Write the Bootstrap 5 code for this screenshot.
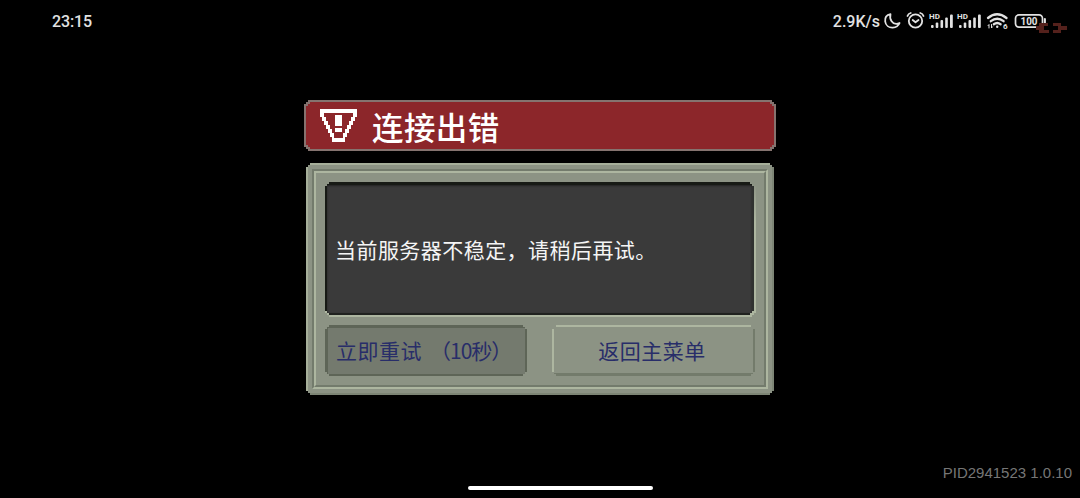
<!DOCTYPE html>
<html lang="zh-CN">
<head>
<meta charset="utf-8">
<meta name="viewport" content="width=device-width, initial-scale=1">
<title>连接出错</title>
<link href="https://cdn.jsdelivr.net/npm/bootstrap@5.3.0/dist/css/bootstrap.min.css" rel="stylesheet">
<style>
body{background:#000;font-family:"Noto Sans CJK SC",sans-serif;height:498px}
.status-bar{height:42px;padding:1px 33px 0 52px;color:#e2e2e2;font:500 16px/42px Roboto,sans-serif}
.status-bar svg{display:block}
.clock{letter-spacing:-.15px}
.rate{margin-right:1px}
.cut{--c:4px;clip-path:polygon(0 var(--c),2px var(--c),2px 2px,var(--c) 2px,var(--c) 0,calc(100% - var(--c)) 0,calc(100% - var(--c)) 2px,calc(100% - 2px) 2px,calc(100% - 2px) var(--c),100% var(--c),100% calc(100% - var(--c)),calc(100% - 2px) calc(100% - var(--c)),calc(100% - 2px) calc(100% - 2px),calc(100% - var(--c)) calc(100% - 2px),calc(100% - var(--c)) 100%,var(--c) 100%,var(--c) calc(100% - 2px),2px calc(100% - 2px),2px calc(100% - var(--c)),0 calc(100% - var(--c)))}
.dialog-box{width:472px;padding-top:58px}
.title-frame{height:51px;background:#85736f;padding:2px}
.title-fill{background:#8c262a;height:47px;padding-left:14px}
.title-text{font-size:31.500px;letter-spacing:.4px;line-height:47px;font-weight:500;color:#fff;margin-left:15px;padding-top:1px}
.panel{width:468px;height:232px;margin-top:12px;background:#8c9384;border:2px solid;border-color:#a6af9a #7d8575 #7d8575 #a6af9a;padding:4px}
.panel-groove{height:220px;border:2px solid;border-color:#737b6c #adb6a0 #adb6a0 #737b6c}
.panel-ridge{height:216px;border:2px solid;border-color:#adb6a0 #737b6c #737b6c #adb6a0}
.panel-face{height:212px;background:#8c9384;padding:9px 9px 0 9px}
.screen-rim{height:135px;background:linear-gradient(#8c9384,#adb6a0 30%);padding:0 2px 2px 0;width:431px}
.screen{height:133px;background:#3a3a3a;border:2px solid #20221f;border-top:3px solid #171a15;border-left-color:#171a15;border-right-color:#303230;color:#f5f5f5;font-size:21px;letter-spacing:.45px;padding:2px 0 0 8px;box-shadow:inset 0 1px 2px #222}
.pixel-btn{height:51px;font-size:21px;letter-spacing:.5px;line-height:1;color:#282d69;padding:0;border:0;white-space:nowrap;border-radius:0}
.btn-down,.btn-down:hover{width:202px;background:#747a6e;border:3px solid #5e6557;border-right-width:2px;border-bottom-width:2px;color:#282d69;padding-bottom:2px}
.btn-up,.btn-up:hover{width:203px;background:#8c9384;border:2px solid;border-bottom-width:3px;border-color:#adb6a0 #737b6b #737b6b #adb6a0;color:#282d69;padding-right:3px}
.seconds{letter-spacing:-1px}
.build-id{position:absolute;right:8px;bottom:14px;font:15px/22px "Liberation Sans",sans-serif;color:#767676}
.home-bar{position:absolute;left:468px;bottom:8px;width:185px;height:4px;background:#fff}
.net-mark{position:absolute;left:1036px;top:20px}
</style>
</head>
<body class="position-relative overflow-hidden m-0">
<header class="status-bar d-flex justify-content-between">
  <span class="clock">23:15</span>
  <div class="d-flex">
    <span class="rate">2.9K/s</span>
    <svg width="166" height="42" fill="none" stroke="#e2e2e2" stroke-width="1.8" stroke-linecap="round" stroke-linejoin="round">
      <path d="M9.500 13.200C5 14 3.800 17 4.200 20.500c.5 4 3.800 6.300 7.600 6.100 3.500-.2 5.700-2 6.800-4.600-3.200 1.400-6.400.6-8-1.800-1.500-2.200-1.800-4.600-1.100-7z"/>
      <circle cx="34.500" cy="20" r="6.700"/>
      <path d="M26.500 15q.8-2.400 3.200-3M42.500 15q-.8-2.400-3.200-3M31.700 19l2.800 2.300 3-2.300"/>
      <g id="signal"><g fill="#e2e2e2" stroke="none"><rect x="50" y="24" width="2.600" height="3" rx="1"/><rect x="54.700" y="21.500" width="2.600" height="5.500" rx="1"/><rect x="59.500" y="19" width="2.600" height="8" rx="1"/><rect x="64.200" y="16.500" width="2.600" height="10.500" rx="1"/><rect x="69" y="13.500" width="2.800" height="13.500" rx="1"/><text x="48" y="18" font-size="8" font-weight="700">HD</text></g></g>
      <use href="#signal" x="28"/>
      <path d="M107 17q9-7.500 18.500 0M109.800 20.200q6.400-5 12.800 0M112.800 23.300q3.400-2.500 6.800 0" stroke-width="2.300"/>
      <circle cx="116.200" cy="25.800" r="1.200" fill="#e2e2e2" stroke="none"/>
      <path d="M108 27v-3.500l-1 1.200M110.500 23.500V27l1-1.200" stroke-width="1"/>
      <text x="122" y="28" font-size="8" font-weight="700" fill="#e2e2e2" stroke="none">6</text>
      <rect x="134.500" y="13.900" width="27" height="12.200" rx="3.500" stroke-width="1.700"/>
      <path d="M163.900 18v4" stroke-width="2"/>
      <text x="148" y="24" text-anchor="middle" font-size="11" font-weight="700" textLength="17" lengthAdjust="spacingAndGlyphs" fill="#e2e2e2" stroke="none">100</text>
    </svg>
  </div>
</header>
<svg class="net-mark" width="34" height="15" fill="#54211c"><path d="M0 6h3V3h9v3H8v4h5v3H3v-3H0zM17 3h8v3h6v4h-6v3h-8v-3h5V6h-5z"/></svg>

<main class="dialog-box mx-auto">
  <div class="title-frame cut">
    <div class="title-fill cut d-flex align-items-center">
      <svg width="37" height="36" viewBox="0 0 36 36" preserveAspectRatio="none" fill="#fff" shape-rendering="crispEdges">
        <path fill-rule="evenodd" d="M0 1h36v8h-2v4h-2v4h-2v4h-2v4h-2v4h-2v5H12v-5h-2v-4H8v-4H6v-4H4v-4H2V9H0zM4 5v4h2v4h2v4h2v4h2v4h2v5h8v-5h2v-4h2v-4h2v-4h2V9h2V5z"/>
        <path d="M15 7h6v11h-6zM15 20h6v4h-6zM14 30h8v4h-8z"/>
      </svg>
      <span class="title-text">连接出错</span>
    </div>
  </div>
  <section class="panel cut mx-auto">
    <div class="panel-groove"><div class="panel-ridge"><div class="panel-face">
      <div class="screen-rim cut"><div class="screen cut d-flex align-items-center">当前服务器不稳定，请稍后再试。</div></div>
      <div class="d-flex justify-content-between pt-2">
        <button class="btn pixel-btn btn-down cut text-start ps-2">立即重试<span class="seconds ms-2">（10秒）</span></button>
        <button class="btn pixel-btn btn-up cut">返回主菜单</button>
      </div>
    </div></div></div>
  </section>
</main>
<div class="build-id">PID2941523 1.0.10</div>
<div class="home-bar rounded-pill"></div>
<script src="https://cdn.jsdelivr.net/npm/bootstrap@5.3.0/dist/js/bootstrap.bundle.min.js"></script>
</body>
</html>
